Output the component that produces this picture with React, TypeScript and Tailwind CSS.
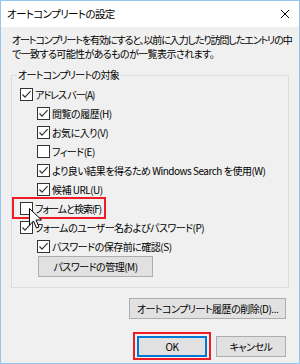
import React from "react";

const font = {
  fontFamily: '"Noto Sans CJK JP", "Noto Sans", sans-serif',
  fontFeatureSettings: '"palt"',
};

function Box({ checked }: { checked: boolean }) {
  return (
    <span className="w-[13px] h-[13px] border border-[#333333] bg-white flex items-center justify-center shrink-0">
      {checked && (
        <svg width="11" height="11" viewBox="0 0 11 11">
          <path d="M1.5 5.5 L4 8.2 L9.6 2.2" fill="none" stroke="#333333" strokeWidth="1.2" />
        </svg>
      )}
    </span>
  );
}

function Row({ level, checked, label, tight, children }: { level: number; checked: boolean; label: string; tight?: boolean; children?: React.ReactNode }) {
  return (
    <div className={`h-[19px] flex items-center relative ${level === 1 ? "pl-[25px]" : "pl-[8px]"}`}>
      {children}
      <Box checked={checked} />
      <span className={`ml-[2px] whitespace-nowrap ${tight ? "tracking-[-1px]" : ""}`}>{label}</span>
    </div>
  );
}

function Btn({ children, className }: { children: React.ReactNode; className?: string }) {
  return (
    <div className={`h-[21px] border border-[#adadad] bg-[#e1e1e1] flex items-center justify-center whitespace-nowrap ${className ?? ""}`}>
      {children}
    </div>
  );
}

export default function App() {
  return (
    <div
      className="w-[300px] h-[364px] bg-[#f0f0f0] border border-[#96c6f0] flex flex-col relative text-[10px] text-black overflow-hidden tracking-[-0.5px]"
      style={font}
    >
      <div className="h-[26px] bg-white flex items-center justify-between pl-[6px] pr-[9px] shrink-0">
        <span className="text-[10.5px] tracking-[-0.6px]">オートコンプリートの設定</span>
        <svg width="10" height="10" viewBox="0 0 10 10">
          <path d="M1 1 L9 9 M9 1 L1 9" stroke="#000" strokeWidth="1" />
        </svg>
      </div>

      <div className="px-[11px] pt-[6px] leading-[14px]">
        <div className="whitespace-nowrap tracking-[-1.1px]">オートコンプリートを有効にすると、以前に入力したり訪問したエントリの中</div>
        <div className="whitespace-nowrap tracking-[-0.6px]">で一致する可能性があるものが一覧表示されます。</div>
      </div>

      <div className="mx-[10px] mt-[14px] border border-[#dcdcdc] relative pt-[9px] pb-[10px]">
        <span className="absolute -top-[8px] left-[5px] bg-[#f0f0f0] px-[1px] leading-[14px] tracking-[-0.7px]">オートコンプリートの対象</span>
        <Row level={0} checked label="アドレス バー(A)" tight />
        <Row level={1} checked label="閲覧の履歴(H)" />
        <Row level={1} checked label="お気に入り(V)" />
        <Row level={1} checked={false} label="フィード(E)" />
        <Row level={1} checked label="より良い結果を得るため Windows Search を使用(W)" />
        <Row level={1} checked label="候補 URL(U)" />
        <Row level={0} checked={false} label="フォームと検索(F)" tight>
          <span className="absolute left-0 -top-[2px] w-[94px] h-[22px] border-2 border-[#ee1c24]" />
        </Row>
        <Row level={0} checked label="フォームのユーザー名およびパスワード(P)" />
        <Row level={1} checked label="パスワードの保存前に確認(S)" />
        <Btn className="ml-[26px] w-[115px]">パスワードの管理(M)</Btn>
      </div>

      <div className="flex justify-end mt-[10px] pr-[13px]">
        <Btn className="w-[157px]">オートコンプリート履歴の削除(D)...</Btn>
      </div>

      <div className="flex justify-end gap-[9px] mt-[17px] pr-[13px]">
        <div className="relative">
          <div className="w-[70px] h-[21px] border-2 border-[#0078d7] bg-[#e1e1e1] flex items-center justify-center">OK</div>
          <span className="absolute -left-[4px] -top-[4px] -right-[4px] -bottom-[3px] border-2 border-[#ee1c24]" />
        </div>
        <Btn className="w-[70px]">キャンセル</Btn>
      </div>

      <svg className="absolute left-[28px] top-[207px]" width="14" height="22" viewBox="0 0 14 22">
        <path d="M0.5 0.5 L0.5 17 L4.5 13 L7.5 20 L10 19 L7 12 L12.5 12 Z" fill="#fff" stroke="#000" strokeWidth="1" />
      </svg>
    </div>
  );
}
